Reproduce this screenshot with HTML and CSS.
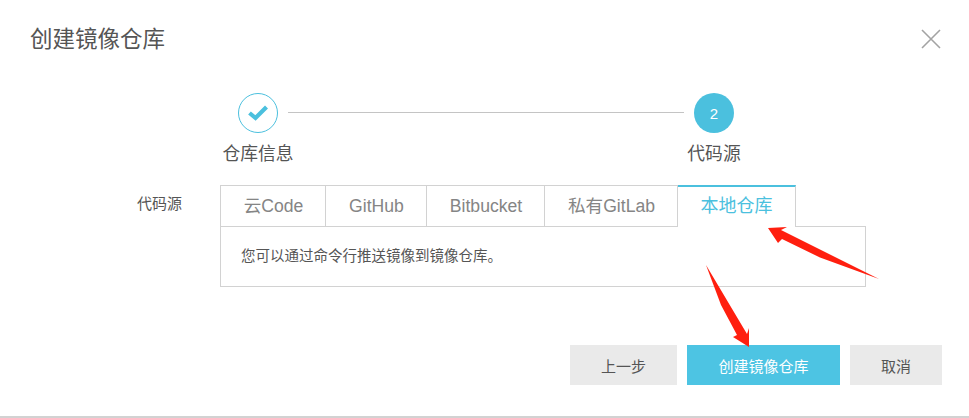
FILE: index.html
```html
<!DOCTYPE html>
<html lang="zh-CN">
<head>
<meta charset="utf-8">
<title>创建镜像仓库</title>
<link rel="stylesheet" href="styles.css">
</head>
<body>
<div class="dialog">
  <header class="head">
    <h1 class="title">创建镜像仓库</h1>
    <svg class="close" width="20" height="20" viewBox="0 0 20 20" aria-label="关闭"><path d="M1 1L19 19M19 1L1 19" fill="none" stroke="#a3a3a3" stroke-width="1.6"/></svg>
  </header>
  <div class="steps">
    <div class="step">
      <div class="circle done">
        <svg width="20" height="16" viewBox="0 0 20 16"><path d="M1.5 8L7.5 13L18.5 2" fill="none" stroke="#4bc0de" stroke-width="4.2"/></svg>
      </div>
      <div class="step-label">仓库信息</div>
    </div>
    <div class="line"></div>
    <div class="step">
      <div class="circle active">2</div>
      <div class="step-label">代码源</div>
    </div>
  </div>
  <div class="form-row">
    <div class="form-label">代码源</div>
    <div class="form-body">
      <div class="tabs">
        <div class="tab t1">云Code</div>
        <div class="tab t2">GitHub</div>
        <div class="tab t3">Bitbucket</div>
        <div class="tab t4">私有GitLab</div>
        <div class="tab t5 selected">本地仓库</div>
      </div>
      <div class="panel">您可以通过命令行推送镜像到镜像仓库。</div>
    </div>
  </div>
  <div class="actions">
    <button class="btn prev">上一步</button>
    <button class="btn primary">创建镜像仓库</button>
    <button class="btn cancel">取消</button>
  </div>
</div>
<svg class="arrows" width="969" height="418" viewBox="0 0 969 418">
  <polygon points="879,279 820,257.5 782,239 778,243 768,228 787,227 781,230" fill="#ff1f0f"/>
  <polygon points="706,265 747,334 749,328 749,347 733,337 737,335 721,305" fill="#ff1f0f"/>
</svg>
</body>
</html>
```
FILE: styles.css
```css
* { box-sizing: border-box; }
html, body { margin: 0; padding: 0; }
body {
  position: relative;
  width: 969px;
  height: 418px;
  overflow: hidden;
  background: #fff;
  font-family: "Liberation Sans", "Noto Sans CJK SC", sans-serif;
  color: #333;
}
.dialog {
  height: 418px;
  border-bottom: 2px solid #d2d2d2;
  display: flex;
  flex-direction: column;
}
.head {
  height: 93px;
  padding: 26px 28px 0 30px;
  display: flex;
  justify-content: space-between;
  align-items: flex-start;
}
.title {
  margin: 0;
  font-size: 22.5px;
  line-height: 28px;
  font-weight: 400;
  color: #555;
}
.close { margin-top: 3px; }
.steps {
  display: flex;
  align-items: flex-start;
  margin-left: 238px;
  width: 496px;
  height: 92px;
}
.step {
  width: 40px;
  display: flex;
  flex-direction: column;
  align-items: center;
}
.circle {
  flex: none;
  width: 40px;
  height: 40px;
  border-radius: 50%;
  display: flex;
  align-items: center;
  justify-content: center;
}
.circle.done { border: 1px solid #4bc0de; }
.circle.active {
  background: #4bc0de;
  color: #fff;
  font-size: 15px;
}
.step-label {
  margin-top: 9px;
  font-size: 17.8px;
  line-height: 24px;
  color: #555;
  white-space: nowrap;
}
.line {
  flex: 1;
  height: 1px;
  margin: 19px 10px 0;
  background: #c4c4c4;
}
.form-row {
  display: flex;
  align-items: flex-start;
}
.form-label {
  width: 220px;
  padding: 10px 38px 0 0;
  text-align: right;
  font-size: 15px;
  line-height: 18px;
  color: #555;
}
.form-body {
  width: 646px;
}
.tabs {
  display: flex;
  height: 42px;
  position: relative;
  z-index: 1;
}
.tab {
  height: 42px;
  border: 1px solid #d2d2d2;
  border-left: 0;
  padding-top: 1px;
  padding-left: 1px;
  text-align: center;
  font-size: 17.6px;
  line-height: 38px;
  color: #858585;
  background: #fff;
  white-space: nowrap;
}
.t1 { width: 106px; border-left: 1px solid #d2d2d2; }
.t2 { width: 101px; }
.t3 { width: 118px; }
.t4 { width: 133px; }
.t5 { width: 118px; }
.tab.selected {
  border-top: 2px solid #4bc0de;
  border-bottom: 0;
  padding-top: 0;
  padding-left: 0;
  color: #4bc0de;
  font-size: 18px;
}
.panel {
  height: 61px;
  margin-top: -1px;
  border: 1px solid #d2d2d2;
  padding: 19px 0 0 20px;
  font-size: 14.5px;
  line-height: 20px;
  color: #555;
}
.actions {
  display: flex;
  gap: 10px;
  margin: 58px 0 0 570px;
}
.btn {
  height: 40px;
  border: 0;
  padding: 0;
  font-family: inherit;
  font-size: 15px;
  color: #555;
  background: #eaeaea;
}
.prev { width: 107px; }
.primary { width: 153px; background: #4dc4e3; color: #fff; }
.cancel { width: 92px; }
.arrows {
  position: absolute;
  left: 0;
  top: 0;
  pointer-events: none;
}
```
